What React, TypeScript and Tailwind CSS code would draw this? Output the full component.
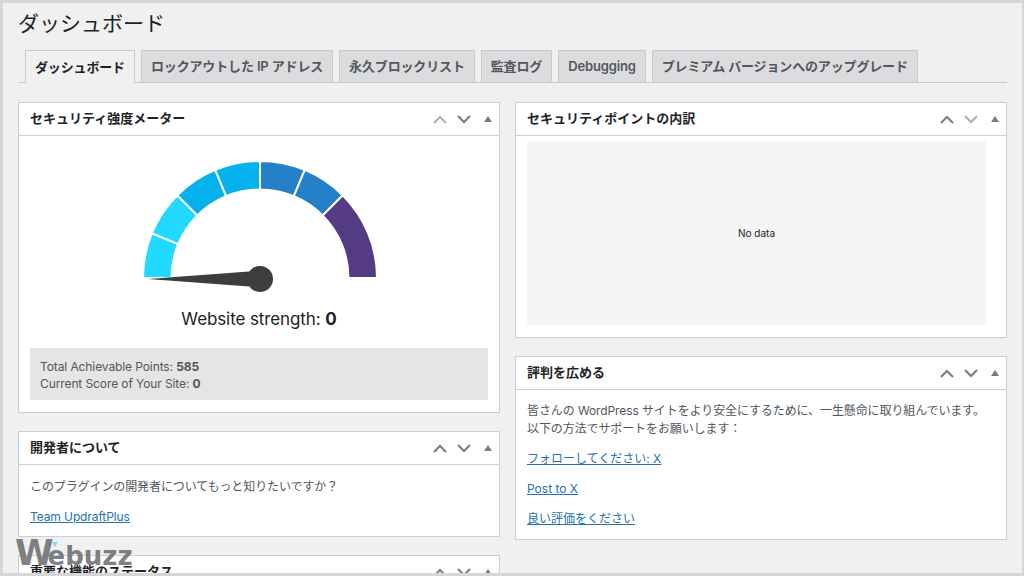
import { ReactNode } from "react"

const FONT = "font-['Inter','Noto_Sans_CJK_JP',sans-serif]"

const tabs = [
  { label: "ダッシュボード", active: true },
  { label: "ロックアウトした IP アドレス" },
  { label: "永久ブロックリスト" },
  { label: "監査ログ" },
  { label: "Debugging" },
  { label: "プレミアム バージョンへのアップグレード" },
]

// gauge slices in degrees from the left end, last one is two slices merged
const slices = [
  { from: 0, to: 22.5, color: "#22daff" },
  { from: 22.5, to: 45, color: "#22daff" },
  { from: 45, to: 67.5, color: "#05b1ec" },
  { from: 67.5, to: 90, color: "#05b1ec" },
  { from: 90, to: 112.5, color: "#2480c9" },
  { from: 112.5, to: 135, color: "#2480c9" },
  { from: 135, to: 180, color: "#553a84" },
]

function point(r: number, deg: number) {
  const a = (deg * Math.PI) / 180
  return `${(117 - r * Math.cos(a)).toFixed(2)} ${(117 - r * Math.sin(a)).toFixed(2)}`
}

function slicePath(from: number, to: number) {
  const R = 117
  const r = 88.5
  return `M${point(R, from)} A${R} ${R} 0 0 1 ${point(R, to)} L${point(r, to)} A${r} ${r} 0 0 0 ${point(r, from)} Z`
}

function Gauge() {
  return (
    <svg width="234" height="136" viewBox="0 0 234 136" className="ml-[1px] block">
      {slices.map((s) => (
        <path key={s.from} d={slicePath(s.from, s.to)} fill={s.color} stroke="#fff" strokeWidth="2" />
      ))}
      <polygon points="5,118 106,110.5 106,125.5" fill="#3d3d3d" />
      <circle cx="117" cy="118" r="13" fill="#3d3d3d" />
    </svg>
  )
}

function Handle({ upLight, downLight }: { upLight?: boolean; downLight?: boolean }) {
  return (
    <div className="flex items-center gap-[10px]">
      <svg width="14" height="9" viewBox="0 0 14 9" fill="none" strokeWidth="2" className={upLight ? "stroke-[#adafb2]" : "stroke-[#787c82]"}>
        <path d="M1 8 L7 2 L13 8" />
      </svg>
      <svg width="14" height="9" viewBox="0 0 14 9" fill="none" strokeWidth="2" className={downLight ? "stroke-[#adafb2]" : "stroke-[#787c82]"}>
        <path d="M1 1 L7 7 L13 1" />
      </svg>
      <div className="ml-[3px] h-0 w-0 border-x-[4px] border-b-[6px] border-x-transparent border-b-[#787c82]" />
    </div>
  )
}

function Panel({ title, children, upLight, downLight }: { title: string; children: ReactNode; upLight?: boolean; downLight?: boolean }) {
  return (
    <section className="border border-[#cdcfd1] bg-white">
      <header className="flex h-[33px] items-center justify-between border-b border-[#cdcfd1] pl-[11px] pr-[7px]">
        <h2 className="text-[13px] font-semibold text-[#1d2327]">{title}</h2>
        <Handle upLight={upLight} downLight={downLight} />
      </header>
      {children}
    </section>
  )
}

function TextLink({ children }: { children: ReactNode }) {
  return (
    <a href="#" className="text-[12px] leading-[20px] text-[#2271b1] underline">
      {children}
    </a>
  )
}

export default function App() {
  return (
    <div className={`relative h-[576px] w-[1024px] overflow-hidden border-[3px] border-r-[2px] border-[#d6d6d6] bg-[#f0f0f0] ${FONT} text-[#50575e]`}>
      <div className="px-[15px] pt-[7px]">
        {/* Title */}
        <h1 className="h-[40px] text-[21px] leading-[28px] font-normal text-[#1d2327]">ダッシュボード</h1>

        {/* Tabs */}
        <nav className="flex h-[33px] w-[989px] gap-[6px] border-b border-[#c9cacc] pl-[7px]">
          {tabs.map((t) => (
            <span
              key={t.label}
              className={
                t.active
                  ? "-mb-px h-[33px] border border-b-0 border-[#c9cacc] bg-[#f0f0f0] px-[9px] text-[13px] leading-[32px] font-semibold tracking-[-0.15px] text-[#1d2327]"
                  : "h-[32px] border border-b-0 border-[#c9cacc] bg-[#dcdcde] px-[9px] text-[13px] leading-[31px] font-semibold tracking-[-0.15px] text-[#50575e]"
              }
            >
              {t.label}
            </span>
          ))}
        </nav>

        {/* Columns */}
        <div className="mt-[19px] flex w-[989px] items-start gap-[15px]">
          <div className="flex w-[482px] flex-col gap-[18px]">
            <Panel title="セキュリティ強度メーター" upLight>
              <div className="flex flex-col items-center pt-[25px]">
                <Gauge />
                <p className="mt-[10px] text-[17px] leading-[24px] tracking-[-0.1px] text-[#1d2327]">
                  Website strength: <b>0</b>
                </p>
              </div>
              <div className="mx-[11px] mt-[17px] mb-[12px] bg-[#e5e5e5] px-[10px] pt-[11px] pb-[8px] text-[12px] leading-[16.5px] tracking-[-0.1px]">
                <div>
                  Total Achievable Points: <b>585</b>
                </div>
                <div>
                  Current Score of Your Site: <b>0</b>
                </div>
              </div>
            </Panel>

            <Panel title="開発者について">
              <div className="flex flex-col gap-[10px] px-[11px] pt-[12px] pb-[9px] text-[12px] leading-[20px] tracking-[-0.1px]">
                <p>このプラグインの開発者についてもっと知りたいですか？</p>
                <div>
                  <TextLink>Team UpdraftPlus</TextLink>
                </div>
              </div>
            </Panel>

            <Panel title="重要な機能のステータス">
              <div className="h-[40px]" />
            </Panel>
          </div>

          <div className="flex w-[492px] flex-col gap-[18px]">
            <Panel title="セキュリティポイントの内訳" downLight>
              <div className="p-[11px] pt-[5px] pb-[12px]">
                <div className="flex h-[184px] w-[459px] items-center justify-center bg-[#f5f5f5] text-[10px] text-[#1d2327]">
                  No data
                </div>
              </div>
            </Panel>

            <Panel title="評判を広める">
              <div className="px-[11px] pt-[12px] pb-[10px] text-[12px]">
                <p className="leading-[18px] tracking-[-0.1px]">
                  皆さんの WordPress サイトをより安全にするために、一生懸命に取り組んでいます。
                  <br />
                  以下の方法でサポートをお願いします：
                </p>
                <div className="mt-[11px] flex flex-col gap-[10px]">
                  <div>
                    <TextLink>フォローしてください: X</TextLink>
                  </div>
                  <div>
                    <TextLink>Post to X</TextLink>
                  </div>
                  <div>
                    <TextLink>良い評価をください</TextLink>
                  </div>
                </div>
              </div>
            </Panel>
          </div>
        </div>
      </div>

      {/* Watermark */}
      <div className="absolute left-[12px] top-[533px] flex items-baseline font-['DejaVu_Sans',sans-serif] font-bold text-[#6e6e6e]/90">
        <span className="text-[35px] leading-[34px] tracking-[-1px]">W</span>
        <span className="-ml-[5px] text-[26px] leading-[34px]">ebuzz</span>
        <div className="absolute left-[37px] top-[6px] h-0 w-0 border-x-[3px] border-t-[5px] border-x-transparent border-t-[#8fd0f0]" />
      </div>
    </div>
  )
}
